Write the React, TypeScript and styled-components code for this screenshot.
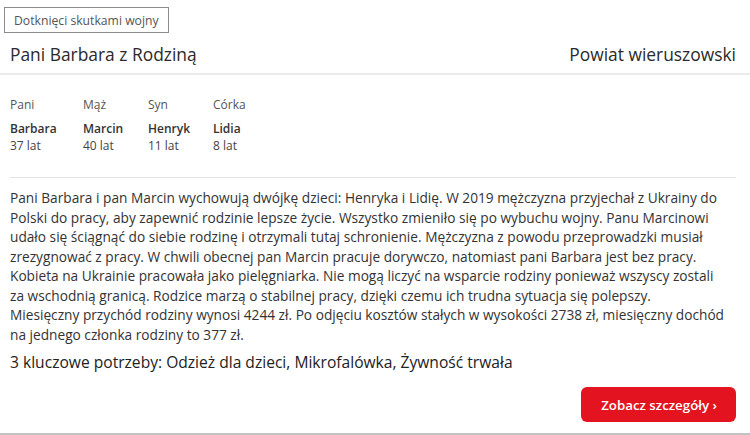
import React from 'react';
import styled, { createGlobalStyle } from 'styled-components';

const Global = createGlobalStyle`
  html, body { margin: 0; padding: 0; background: #ffffff; }
  body { font-family: "Open Sans", "Noto Sans", sans-serif; color: #333; }
  * { box-sizing: border-box; }
`;

const Card = styled.article`
  width: 750px;
  height: 435px;
  display: flex;
  flex-direction: column;
  border-bottom: 2px solid #c2c2c2;
  background: #fff;
`;

const TagRow = styled.div`
  display: flex;
  padding: 7px 0 0 4px;
`;

const Tag = styled.span`
  display: inline-flex;
  align-items: center;
  height: 26px;
  padding: 0 9px;
  border: 1px solid #8c8c8c;
  font-size: 12.2px;
  color: #555;
`;

const Header = styled.header`
  display: flex;
  justify-content: space-between;
  align-items: flex-start;
  height: 42px;
  padding: 8px 14px 0 10px;
  border-bottom: 2px solid #ebebeb;
`;

const HeaderText = styled.h2`
  margin: 0;
  font-size: 17.4px;
  line-height: 27px;
  font-weight: 500;
  color: #2a2a2a;
`;

const Body = styled.div`
  display: flex;
  flex-direction: column;
  padding: 0 14px 0 10px;
`;

const Family = styled.div`
  display: grid;
  grid-template-columns: 73px 65px 65px auto;
  justify-content: start;
  margin-top: 22px;
  padding-bottom: 22px;
  border-bottom: 1px solid #e4e4e4;
`;

const Member = styled.div`
  display: flex;
  flex-direction: column;
`;

const Role = styled.span`
  font-size: 12px;
  line-height: 16px;
  color: #555;
  margin-bottom: 8px;
`;

const Name = styled.span`
  font-size: 12px;
  line-height: 16px;
  font-weight: 600;
  color: #333;
`;

const Age = styled.span`
  font-size: 12px;
  line-height: 18px;
  color: #444;
`;

const Story = styled.p`
  margin: 10px 0 0;
  font-size: 13.7px;
  line-height: 19.5px;
  color: #333;
`;

const StoryLine = styled.span`
  display: block;
  white-space: nowrap;
`;

const Needs = styled.h3`
  margin: 7px 0 0;
  font-size: 15.6px;
  line-height: 23px;
  font-weight: 500;
  color: #222;
`;

const Actions = styled.div`
  display: flex;
  justify-content: flex-end;
  margin-top: 13px;
`;

const DetailsButton = styled.button`
  height: 35px;
  padding: 0 19px 0 20px;
  border: none;
  border-radius: 6px;
  background: #e3141f;
  color: #fff;
  font-family: inherit;
  font-size: 13.3px;
  font-weight: 600;
  cursor: pointer;
`;

const members = [
  { role: 'Pani', name: 'Barbara', age: '37 lat' },
  { role: 'Mąż', name: 'Marcin', age: '40 lat' },
  { role: 'Syn', name: 'Henryk', age: '11 lat' },
  { role: 'Córka', name: 'Lidia', age: '8 lat' },
];

const story = [
  'Pani Barbara i pan Marcin wychowują dwójkę dzieci: Henryka i Lidię. W 2019 mężczyzna przyjechał z Ukrainy do',
  'Polski do pracy, aby zapewnić rodzinie lepsze życie. Wszystko zmieniło się po wybuchu wojny. Panu Marcinowi',
  'udało się ściągnąć do siebie rodzinę i otrzymali tutaj schronienie. Mężczyzna z powodu przeprowadzki musiał',
  'zrezygnować z pracy. W chwili obecnej pan Marcin pracuje dorywczo, natomiast pani Barbara jest bez pracy.',
  'Kobieta na Ukrainie pracowała jako pielęgniarka. Nie mogą liczyć na wsparcie rodziny ponieważ wszyscy zostali',
  'za wschodnią granicą. Rodzice marzą o stabilnej pracy, dzięki czemu ich trudna sytuacja się polepszy.',
  'Miesięczny przychód rodziny wynosi 4244 zł. Po odjęciu kosztów stałych w wysokości 2738 zł, miesięczny dochód',
  'na jednego członka rodziny to 377 zł.',
];

export default function App() {
  return (
    <>
      <Global />
      <Card>
        <TagRow>
          <Tag>Dotknięci skutkami wojny</Tag>
        </TagRow>
        <Header>
          <HeaderText>Pani Barbara z Rodziną</HeaderText>
          <HeaderText>Powiat wieruszowski</HeaderText>
        </Header>
        <Body>
          <Family>
            {members.map((m) => (
              <Member key={m.name}>
                <Role>{m.role}</Role>
                <Name>{m.name}</Name>
                <Age>{m.age}</Age>
              </Member>
            ))}
          </Family>
          <Story>
            {story.map((line, i) => (
              <StoryLine key={i}>{line}</StoryLine>
            ))}
          </Story>
          <Needs>3 kluczowe potrzeby: Odzież dla dzieci, Mikrofalówka, Żywność trwała</Needs>
          <Actions>
            <DetailsButton>Zobacz szczegóły ›</DetailsButton>
          </Actions>
        </Body>
      </Card>
    </>
  );
}
